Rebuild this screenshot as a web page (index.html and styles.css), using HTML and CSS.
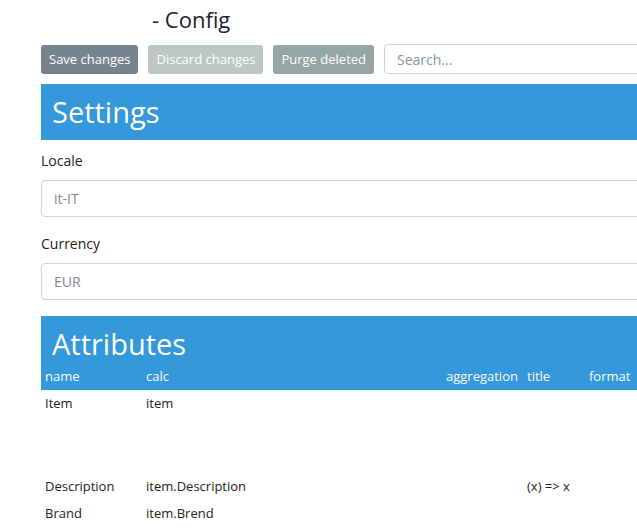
FILE: index.html
```html
<!DOCTYPE html>
<html>
<head>
<meta charset="utf-8">
<link rel="stylesheet" href="styles.css">
</head>
<body>
<div class="page">
  <h1 class="title"><span class="logo"></span>- Config</h1>
  <div class="toolbar">
    <button class="btn btn-save">Save changes</button>
    <button class="btn btn-discard">Discard changes</button>
    <button class="btn btn-purge">Purge deleted</button>
    <input class="search" placeholder="Search...">
  </div>
  <section class="section">
    <h2 class="bar">Settings</h2>
    <div class="field">
      <label class="label">Locale</label>
      <input class="input" placeholder="it-IT">
    </div>
    <div class="field">
      <label class="label">Currency</label>
      <input class="input" placeholder="EUR">
    </div>
  </section>
  <section class="section attrs">
    <div class="attr-head">
      <h2 class="bar-title">Attributes</h2>
      <div class="row head-row">
        <span>name</span><span>calc</span><span>aggregation</span><span>title</span><span>format</span>
      </div>
    </div>
    <div class="row data-row tall">
      <span>Item</span><span>item</span><span></span><span></span><span></span>
    </div>
    <div class="row data-row">
      <span>Description</span><span>item.Description</span><span></span><span>(x) =&gt; x</span><span></span>
    </div>
    <div class="row data-row">
      <span>Brand</span><span>item.Brend</span><span></span><span></span><span></span>
    </div>
  </section>
</div>
</body>
</html>
```
FILE: styles.css
```css
html, body {
  margin: 0;
  padding: 0;
  overflow: hidden;
  background: #fff;
}
body {
  font-family: "Open Sans", "Noto Sans", sans-serif;
  color: #222;
}
.page {
  padding-left: 41px;
  width: 720px;
}
.title {
  margin: 0;
  height: 44px;
  font-size: 22px;
  font-weight: 400;
  line-height: 28px;
  color: #1a2330;
  display: flex;
  align-items: flex-start;
  padding-top: 5px;
  box-sizing: border-box;
}
.logo {
  display: inline-block;
  width: 111px;
  height: 20px;
}
.toolbar {
  display: flex;
  align-items: center;
  gap: 10px;
  height: 30px;
}
.btn {
  height: 29px;
  border: none;
  border-radius: 3px;
  padding: 0 8px;
  color: #fff;
  font-family: inherit;
  font-size: 13px;
}
.btn-save { background: #778390; }
.btn-discard { background: #bcc6c5; }
.btn-purge { background: #95a5a6; }
.search {
  flex: 1;
  height: 30px;
  box-sizing: border-box;
  border: 1px solid #ced4da;
  border-radius: 4px;
  padding: 0 12px;
  font-family: inherit;
  font-size: 14px;
}
.search::placeholder { color: #8a939c; }
.section {
  margin-top: 10px;
}
.bar {
  margin: 0;
  height: 56px;
  background: #3498db;
  color: #fff;
  font-size: 29px;
  font-weight: 400;
  line-height: 56px;
  padding-left: 11px;
}
.field {
  display: flex;
  flex-direction: column;
}
.field + .field {
  margin-top: 6px;
}
.label {
  font-size: 14px;
  line-height: 20px;
  margin-top: 11px;
  margin-bottom: 9px;
  color: #222;
}
.input {
  height: 37px;
  box-sizing: border-box;
  border: 1px solid #d0d4d9;
  border-radius: 4px;
  padding: 0 12px;
  font-family: inherit;
  font-size: 14px;
}
.input::placeholder { color: #7e8790; }
.section.attrs {
  margin-top: 16px;
}
.attr-head {
  background: #3498db;
  color: #fff;
}
.bar-title {
  margin: 0;
  height: 47px;
  font-size: 29px;
  font-weight: 400;
  line-height: 56px;
  padding-left: 11px;
}
.row {
  display: grid;
  grid-template-columns: 101px 300px 81px 62px 80px;
  font-size: 13px;
}
.row span {
  padding-left: 4px;
  white-space: nowrap;
}
.head-row {
  height: 27px;
  line-height: 27px;
}
.data-row {
  height: 27px;
  line-height: 27px;
  color: #222;
}
.data-row.tall {
  height: 83px;
}
```
